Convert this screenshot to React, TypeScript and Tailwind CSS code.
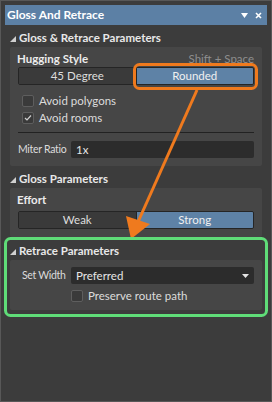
import React from 'react';

const FONT = { fontFamily: 'Lato, "Noto Sans", sans-serif' };

function SectionHeader({ label }: { label: string }) {
    return (
        <div className="flex items-center h-[16px] pl-[5px] gap-[3px] text-[11.5px] font-bold text-[#e8e8e8] whitespace-nowrap">
            <svg width="6" height="6" viewBox="0 0 6 6" className="mt-[1px]">
                <path d="M6 0 L6 6 L0 6 Z" fill="#d0d0d0" />
            </svg>
            <span>{label}</span>
        </div>
    );
}

function Checkbox({ checked, label }: { checked?: boolean; label: string }) {
    return (
        <div className="flex items-center gap-[5px] h-[17px]">
            <div className="w-[12px] h-[12px] rounded-[2px] bg-[#3a3a3a] border border-[#5e5e5e] flex items-center justify-center">
                {checked && (
                    <svg width="8" height="8" viewBox="0 0 8 8">
                        <path d="M1 4 L3 6 L7 1.5" stroke="#cfcfcf" strokeWidth="1.2" fill="none" />
                    </svg>
                )}
            </div>
            <span className="text-[11.5px] text-[#dcdcdc] whitespace-nowrap">{label}</span>
        </div>
    );
}

function Segmented({ left, right }: { left: string; right: string }) {
    return (
        <div className="flex h-[18px] border border-[#252525] rounded-[2px] overflow-hidden text-[11.5px]">
            <div className="flex-1 flex items-center justify-center bg-[#3a3a3a] text-[#dedede] border-r border-[#252525]">{left}</div>
            <div className="flex-1 flex items-center justify-center bg-[#5e82a6] text-[#f0f0f0]">{right}</div>
        </div>
    );
}

export default function App() {
    return (
        <div style={FONT} className="relative w-[272px] h-[402px] bg-[#3c3c3c] border border-[#585858] p-[4px] overflow-hidden">
            {/* title bar */}
            <div className="flex items-center justify-between h-[20px] bg-[#5c80a5] pl-[2px] pr-[5px]">
                <span className="text-[12px] font-bold text-white">Gloss And Retrace</span>
                <div className="flex items-center gap-[7px] text-white">
                    <svg width="7" height="5" viewBox="0 0 7 5"><path d="M0 0 L7 0 L3.5 5 Z" fill="#fff" /></svg>
                    <svg width="7" height="7" viewBox="0 0 7 7"><path d="M1 1 L6 6 M6 1 L1 6" stroke="#fff" strokeWidth="1.6" /></svg>
                </div>
            </div>

            <div className="mt-[5px]">
                <SectionHeader label="Gloss & Retrace Parameters" />
                <div className="mx-[5px] mt-[1px] bg-[#464646] rounded-[2px] px-[8px] pt-[5px] pb-[8px]">
                    <div className="flex items-center justify-between h-[14px]">
                        <span className="text-[11.5px] font-bold text-[#ececec] -ml-[1px]">Hugging Style</span>
                        <span className="text-[11.5px] text-[#8e8e8e]">Shift + Space</span>
                    </div>
                    <div className="mt-[1px]">
                        <Segmented left="45 Degree" right="Rounded" />
                    </div>
                    <div className="pl-[4px] mt-[7px]">
                        <Checkbox label="Avoid polygons" />
                        <Checkbox checked label="Avoid rooms" />
                    </div>
                    <div className="h-[1px] bg-[#222] mt-[6px]" />
                    <div className="flex items-center mt-[8px]">
                        <span className="w-[53px] text-[10.5px] tracking-[-0.3px] text-[#dcdcdc] whitespace-nowrap">Miter Ratio</span>
                        <div className="flex-1 h-[17px] bg-[#2c2c2c] rounded-[2px] flex items-center px-[5px] text-[11.5px] text-[#e6e6e6]">1x</div>
                    </div>
                </div>
            </div>

            <div className="mt-[5px]">
                <SectionHeader label="Gloss Parameters" />
                <div className="mx-[5px] mt-[1px] bg-[#464646] rounded-[2px] px-[8px] pt-[5px] pb-[8px]">
                    <div className="h-[14px] text-[11.5px] font-bold text-[#ececec] flex items-center -ml-[1px]">Effort</div>
                    <div className="mt-[4px]">
                        <Segmented left="Weak" right="Strong" />
                    </div>
                </div>
            </div>

            <div className="mt-[6px]">
                <SectionHeader label="Retrace Parameters" />
                <div className="mx-[5px] mt-[1px] bg-[#464646] rounded-[2px] px-[8px] pt-[7px] pb-[6px]">
                    <div className="flex items-center">
                        <span className="w-[53px] pl-[4px] text-[10.5px] tracking-[-0.3px] text-[#dcdcdc] whitespace-nowrap">Set Width</span>
                        <div className="flex-1 h-[17px] bg-[#2c2c2c] rounded-[2px] flex items-center justify-between px-[5px] text-[11.5px] text-[#e6e6e6]">
                            <span>Preferred</span>
                            <svg width="7" height="4" viewBox="0 0 7 4"><path d="M0 0 L7 0 L3.5 4 Z" fill="#e6e6e6" /></svg>
                        </div>
                    </div>
                    <div className="pl-[53px] mt-[3px]">
                        <Checkbox label="Preserve route path" />
                    </div>
                </div>
            </div>

            {/* annotation overlay */}
            <svg className="absolute left-[-1px] top-[-1px] pointer-events-none" width="272" height="402" viewBox="0 0 272 402">
                <rect x="134.5" y="64.5" width="122" height="24" rx="5" fill="none" stroke="#ef7a1e" strokeWidth="3" />
                <line x1="197" y1="90" x2="138" y2="222" stroke="#ef7a1e" strokeWidth="3" />
                <path d="M131 239 L126 216 L150 224 Z" fill="#ef7a1e" />
                <rect x="5.5" y="238.5" width="261" height="77" rx="5" fill="none" stroke="#5fdc78" strokeWidth="3" />
            </svg>
        </div>
    );
}
